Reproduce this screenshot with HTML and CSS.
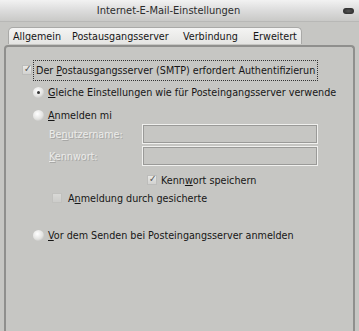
FILE: index.html
```html
<!DOCTYPE html>
<html lang="de">
  <head>
    <meta charset="UTF-8" />
    <title>Internet-E-Mail-Einstellungen</title>
    <link rel="stylesheet" href="styles.css">
  </head>
  <body>
    <div class="window">
      <div class="titlebar">
        <span class="title">Internet-E-Mail-Einstellungen</span>
        <span class="pill"></span>
      </div>
      <div class="tabs">
        <span class="tab first">Allgemein</span>
        <span class="tab active">Postausgangsserver</span>
        <span class="tab third">Verbindung</span>
        <span class="tab last">Erweitert</span>
      </div>
      <div class="panel">
        <div class="row auth">
          <span class="check on"></span>
          <span class="label focus">Der <u>P</u>ostausgangsserver (SMTP) erfordert Authentifizierun</span>
        </div>
        <div class="row same">
          <span class="radio on"></span>
          <span class="label"><u>G</u>leiche Einstellungen wie für Posteingangsserver verwende</span>
        </div>
        <div class="row login">
          <span class="radio"></span>
          <span class="label"><u>A</u>nmelden mi</span>
        </div>
        <div class="field user">
          <span class="flabel">Be<u>n</u>utzername:</span>
          <span class="input"></span>
        </div>
        <div class="field">
          <span class="flabel"><u>K</u>ennwort:</span>
          <span class="input"></span>
        </div>
        <div class="row save">
          <span class="check on"></span>
          <span class="label">Kenn<u>w</u>ort speichern</span>
        </div>
        <div class="row spa">
          <span class="check off"></span>
          <span class="label">A<u>n</u>meldung durch gesicherte</span>
        </div>
        <div class="row before">
          <span class="radio"></span>
          <span class="label"><u>V</u>or dem Senden bei Posteingangsserver anmelden</span>
        </div>
      </div>
    </div>
  </body>
</html>
```
FILE: styles.css
```css
*{
    margin: 0;
    padding: 0;
    box-sizing: border-box;
}
body{
    background: #c6c6c3;
    font-family: 'DejaVu Sans Condensed', 'DejaVu Sans', sans-serif;
    font-size: 10.7px;
    color: #161616;
}
u{
    text-decoration: underline;
    text-underline-offset: 1px;
}
.window{
    width: 359px;
    height: 331px;
    display: flex;
    flex-direction: column;
    background: #c6c6c3;
    overflow: hidden;
}
.titlebar{
    height: 22px;
    display: flex;
    align-items: center;
    justify-content: center;
    position: relative;
    padding-right: 22px;
    background: linear-gradient(#f2f2f2, #dcdcdc 50%, #c9c9c7);
    border-bottom: 1px solid #b8b8b6;
}
.title{
    font-size: 11px;
    color: #2c2c2c;
}
.pill{
    position: absolute;
    right: 5px;
    top: 8px;
    width: 11px;
    height: 6px;
    border-radius: 3px;
    background: radial-gradient(#555, #222);
}
.tabs{
    display: flex;
    margin: 5px 0 0 8px;
    height: 17px;
    width: 294px;
    border: 1px solid #a9a9a7;
    border-bottom: none;
    border-radius: 5px 5px 0 0;
    background: linear-gradient(#f4f4f3, #e4e4e2);
}
.tab{
    display: flex;
    align-items: center;
    padding: 0 0 0 4px;
    line-height: 15px;
    white-space: nowrap;
}
.tab.first{
    width: 58px;
}
.tab.active{
    width: 112px;
    padding-left: 5px;
}
.tab.third{
    width: 70px;
}
.panel{
    flex: 1;
    margin: 1px 4px 0 4px;
    border: 2px solid #8f8f8d;
    border-bottom: none;
    border-radius: 4px 4px 0 0;
    display: flex;
    flex-direction: column;
    padding: 13px 0 0 0;
}
.row{
    display: flex;
    align-items: center;
    height: 20px;
}
.label{
    white-space: nowrap;
    padding: 0 2px;
    margin-left: 2px;
}
.auth{
    padding-left: 16px;
}
.focus{
    outline: 1px dotted #333;
    outline-offset: 0;
    line-height: 19px;
}
.check{
    width: 10px;
    height: 10px;
    border: 1px solid #bdbdbb;
    background: linear-gradient(#e9e9e7, #d2d2d0);
    position: relative;
    flex-shrink: 0;
}
.check.on::after{
    content: "\2713";
    position: absolute;
    left: 1px;
    top: -3px;
    font-size: 10px;
    color: #555;
}
.check.off{
    opacity: 0.55;
}
.radio{
    width: 11px;
    height: 11px;
    border-radius: 50%;
    background: radial-gradient(circle at 40% 35%, #ffffff, #e2e2e0 55%, #a8a8a6);
    position: relative;
    flex-shrink: 0;
}
.radio.on::after{
    content: "";
    position: absolute;
    left: 4px;
    top: 4px;
    width: 3px;
    height: 3px;
    border-radius: 50%;
    background: #333;
}
.same{
    margin-top: 2px;
    padding-left: 27px;
}
.login{
    margin-top: 3px;
    padding-left: 27px;
}
.field{
    display: flex;
    align-items: center;
    height: 20px;
    padding-left: 43px;
    margin-top: 2px;
}
.user{
    margin-top: -1px;
}
.flabel{
    width: 93px;
    color: #ececea;
    text-shadow: 1px 1px 0 #a8a8a6;
}
.input{
    width: 176px;
    height: 20px;
    border: 1px solid #f0f0ee;
    outline: 1px solid #9a9a98;
    outline-offset: -2px;
    background: #c6c6c3;
}
.save{
    margin-top: 4px;
    padding-left: 141px;
}
.spa{
    margin-top: -2px;
    padding-left: 46px;
}
.spa .label{
    margin-left: 4px;
}
.before{
    margin-top: 17px;
    padding-left: 27px;
}
```
